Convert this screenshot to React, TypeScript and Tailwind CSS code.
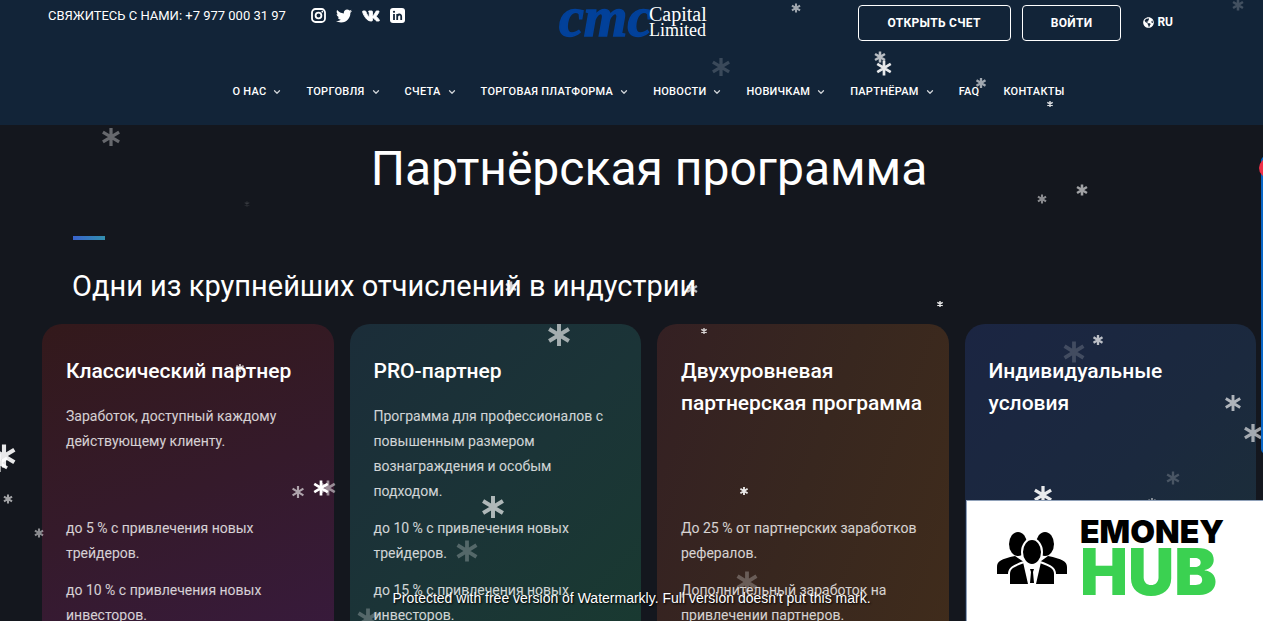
import { ChevronDown } from "lucide-react";
import { FaGlobeAmericas, FaTwitter, FaVk } from "react-icons/fa";

const navItems = [
  { title: "О НАС", menu: true },
  { title: "ТОРГОВЛЯ", menu: true },
  { title: "СЧЕТА", menu: true },
  { title: "ТОРГОВАЯ ПЛАТФОРМА", menu: true },
  { title: "НОВОСТИ", menu: true },
  { title: "НОВИЧКАМ", menu: true },
  { title: "ПАРТНЁРАМ", menu: true },
  { title: "FAQ", menu: false },
  { title: "КОНТАКТЫ", menu: false },
];

const programs = [
  {
    title: "Классический партнер",
    description: "Заработок, доступный каждому действующему клиенту.",
    terms: ["до 5 % с привлечения новых трейдеров.", "до 10 % с привлечения новых инвесторов."],
    background: "bg-linear-160 from-[#33191b] via-[#351a2b] to-[#381a3e]",
  },
  {
    title: "PRO-партнер",
    description: "Программа для профессионалов с повышенным размером вознаграждения и особым подходом.",
    terms: ["до 10 % с привлечения новых трейдеров.", "до 15 % с привлечения новых инвесторов."],
    background: "bg-linear-135 from-[#1b2d39] via-[#1b3437] to-[#193a30]",
  },
  {
    title: "Двухуровневая партнерская программа",
    description: "",
    terms: ["До 25 % от партнерских заработков рефералов.", "Дополнительный заработок на привлечении партнеров."],
    background: "bg-linear-110 from-[#342023] via-[#38271f] to-[#402c1b]",
  },
  {
    title: "Индивидуальные условия",
    description: "",
    terms: [],
    background: "bg-linear-135 from-[#1b2542] via-[#1b293e] to-[#1c3036]",
  },
];

// x, y, size, opacity
const flakes = [
  [796, 8, 9, 0.6],
  [721, 67, 18, 0.17],
  [880, 57, 11, 0.7],
  [884, 68, 15, 0.9],
  [981, 83, 10, 0.6],
  [1050, 104, 6, 0.85],
  [1238, 5, 11, 0.2],
  [111, 137, 18, 0.35],
  [247, 204, 5, 0.15],
  [1042, 199, 9, 0.5],
  [1082, 190, 11, 0.6],
  [940, 304, 6, 0.9],
  [511, 287, 11, 0.8],
  [692, 289, 11, 0.7],
  [559, 335, 22, 0.6],
  [704, 331, 6, 0.8],
  [240, 368, 8, 0.7],
  [1098, 340, 10, 0.7],
  [1074, 352, 21, 0.17],
  [1233, 403, 16, 0.65],
  [1253, 433, 18, 0.6],
  [1043, 495, 18, 0.9],
  [1173, 478, 13, 0.2],
  [1152, 502, 8, 0.5],
  [744, 491, 8, 0.9],
  [4, 456, 23, 0.9],
  [-1, 463, 18, 0.9],
  [8, 499, 9, 0.6],
  [39, 533, 9, 0.5],
  [298, 492, 12, 0.6],
  [321, 488, 15, 1],
  [328, 488, 15, 0.5],
  [493, 507, 22, 0.65],
  [467, 551, 21, 0.25],
  [747, 582, 21, 0.25],
  [368, 619, 21, 0.25],
];

function Snow() {
  return (
    <svg className="pointer-events-none absolute inset-0 size-full" aria-hidden="true">
      {flakes.map(([x, y, size, opacity]) => (
        <path
          key={`${x}-${y}`}
          d="M0-10V10M-9-5.500 9 5.500M-9 5.500 9-5.500"
          transform={`translate(${x} ${y}) scale(${size / 20})`}
          stroke="#fff"
          strokeWidth={size < 12 ? 4.6 : 3.6}
          opacity={opacity}
        />
      ))}
    </svg>
  );
}

function InstagramIcon() {
  return (
    <svg width="15" height="15" viewBox="0 0 15 15" fill="none" stroke="currentColor" aria-hidden="true">
      <rect x="1" y="1" width="13" height="13" rx="3.500" strokeWidth="1.800" />
      <circle cx="7.500" cy="7.500" r="2.900" strokeWidth="1.800" />
      <circle cx="11.300" cy="3.700" r=".9" fill="currentColor" stroke="none" />
    </svg>
  );
}

function LinkedinIcon() {
  return (
    <svg width="15" height="15" viewBox="0 0 15 15" aria-hidden="true">
      <rect width="15" height="15" rx="3" fill="currentColor" />
      <g fill="none" stroke="#122438" strokeWidth="1.800">
        <path d="M4 6V12M7.200 6V12M7.200 9C7.200 6 11.200 5.500 11.200 8.500V12" />
      </g>
      <circle cx="4" cy="3.800" r="1.100" fill="#122438" />
    </svg>
  );
}

function Logo() {
  return (
    <a href="#" aria-label="CMC Capital Limited">
      <svg className="overflow-visible" width="148" height="36" viewBox="0 0 148 36">
        <text
          x="1"
          y="31"
          fill="#02419a"
          stroke="#02419a"
          strokeWidth="1.500"
          className="font-['Liberation_Serif',serif] text-[56px] font-bold italic"
        >
          cmc
        </text>
        <g fill="#fff" className="font-['Liberation_Serif',serif]">
          <text x="91" y="16" className="text-[20px]">Capital</text>
          <text x="91" y="31" className="text-[18px]">Limited</text>
        </g>
      </svg>
    </a>
  );
}

function Header() {
  return (
    <header className="flex h-[125px] flex-col bg-[#122438]">
      <div className="grid grid-cols-[1fr_auto_1fr] items-start pt-[5px]">
        <div className="flex items-center pl-12">
          <a href="#" className="text-[13px] leading-[21px]">
            СВЯЖИТЕСЬ С НАМИ: +7 977 000 31 97
          </a>
          <div className="ml-[25px] flex items-center gap-2.5">
            <a href="#" aria-label="Instagram">
              <InstagramIcon />
            </a>
            <a href="#" aria-label="Twitter">
              <FaTwitter className="size-4" />
            </a>
            <a href="#" aria-label="VK">
              <FaVk className="size-[18px]" stroke="currentColor" strokeWidth={30} />
            </a>
            <a href="#" aria-label="LinkedIn">
              <LinkedinIcon />
            </a>
          </div>
        </div>
        <Logo />
        <div className="flex items-start justify-end pr-[90px] font-bold">
          <button className="h-9 rounded border border-white px-[29px] text-[12px] tracking-wide">ОТКРЫТЬ СЧЕТ</button>
          <button className="ml-[11px] h-9 rounded border border-white px-7 text-[12px] tracking-wide">ВОЙТИ</button>
          <a href="#" className="ml-[22px] flex h-[34px] items-center gap-[3px] text-[12px]">
            <FaGlobeAmericas className="size-[11px]" />
            RU
          </a>
        </div>
      </div>
      <nav className="mt-10 flex justify-center gap-6 pl-[34px] text-[11px] leading-[22px] font-medium tracking-wide">
        {navItems.map((item) => (
          <a key={item.title} href="#" className="flex items-center gap-1.5">
            {item.title}
            {item.menu && <ChevronDown className="size-[10px] opacity-80" strokeWidth={3} />}
          </a>
        ))}
      </nav>
    </header>
  );
}

function EmoneyHub() {
  return (
    <aside className="absolute right-0 bottom-0 flex h-[121px] w-[297px] items-start border-t border-l border-slate-400 bg-white pt-[17px]">
      <svg className="mt-[14px] ml-[30px] shrink-0" width="70" height="52" viewBox="0 0 70 52" aria-hidden="true">
        <ellipse cx="21" cy="12" rx="9" ry="12" />
        <ellipse cx="48" cy="12" rx="9" ry="12" />
        <path d="M0 42V35C0 29 4 27 18 24L30 32H40L51 24C65 27 70 29 70 35V42Z" />
        <path
          d="M12 53V42C12 36 16 34 27 30H43C54 34 58 36 58 42V53Z"
          stroke="#fff"
          strokeWidth="2"
        />
        <path d="M26 30 31 52H39L44 30Z" fill="#fff" />
        <path d="M33 37H37L36 40 37 51H33L34 40Z" />
        <ellipse cx="35" cy="20" rx="10" ry="13" stroke="#fff" strokeWidth="2" />
      </svg>
      <div className="ml-[13px] font-['Inter',sans-serif] font-black">
        <div className="text-[32px] leading-7 text-black">EMONEY</div>
        <div className="text-[64px] leading-[52px] text-[#3bd151]">HUB</div>
      </div>
    </aside>
  );
}

export default function App() {
  return (
    <div className="relative h-screen overflow-hidden bg-[#14171e] font-['Roboto','Liberation_Sans',sans-serif] text-white">
      <Header />
      <main className="pr-[7px] pl-[42px]">
        <h1 className="pt-[13px] text-center text-[48px] leading-[62px]">Партнёрская программа</h1>
        <section>
          <div className="mt-9 ml-[31px] h-1 w-8 bg-linear-to-r from-[#3a62cc] to-[#338fae]" />
          <h2 className="mt-7 ml-[30px] text-[29px] leading-9">Одни из крупнейших отчислений в индустрии</h2>
          <div className="mt-5 grid grid-cols-4 gap-4">
            {programs.map((program) => (
              <article key={program.title} className={`rounded-[20px] px-6 pt-[31px] pb-8 ${program.background}`}>
                <div className="mb-3 min-h-[149px]">
                  <h3 className="text-[21px] leading-8 font-medium">{program.title}</h3>
                  {program.description && (
                    <p className="mt-[17px] text-[14px] leading-[25px] text-white/80">{program.description}</p>
                  )}
                </div>
                <div className="flex flex-col gap-3 text-[14px] leading-[25px] text-white/80">
                  {program.terms.map((term) => (
                    <p key={term}>{term}</p>
                  ))}
                </div>
              </article>
            ))}
          </div>
        </section>
      </main>

      <Snow />

      {/* Side widget */}
      <div className="absolute top-[156px] -right-2 h-[298px] w-[10px] rounded-md bg-[#0866c6]">
        <span className="absolute top-0.5 -left-0.5 size-5 rounded-full bg-[#ef3048]" />
      </div>

      <p className="absolute inset-x-0 bottom-[13px] text-center font-['Liberation_Sans',sans-serif] text-[14px] leading-5 text-white [text-shadow:1px_1px_2px_#000]">
        Protected with free version of Watermarkly. Full version doesn't put this mark.
      </p>
      <EmoneyHub />
    </div>
  );
}
